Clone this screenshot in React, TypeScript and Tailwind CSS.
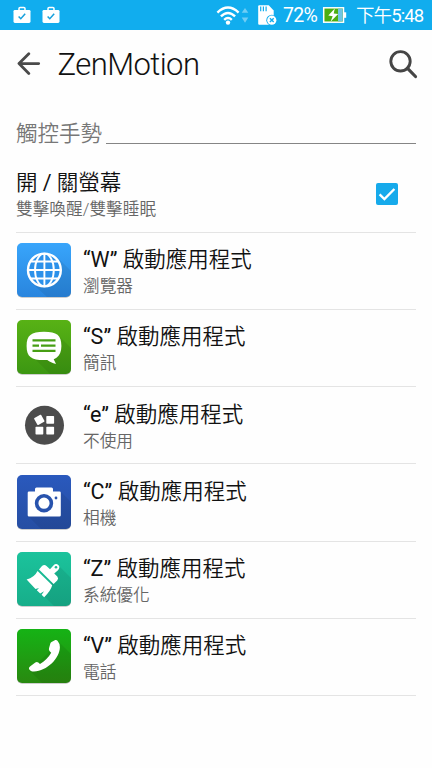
import React, { useId } from "react";

const FONT = "font-[Roboto,'Noto_Sans_CJK_TC',sans-serif]";

type TileProps = { from: string; to: string; shadow: string; children: React.ReactNode };

function Tile({ from, to, shadow, children }: TileProps) {
  const id = useId();
  return (
    <svg className="block h-14 w-14" viewBox="0 0 56 56">
      <defs>
        <linearGradient id={id} x1="0" y1="0" x2="0" y2="1">
          <stop offset="0" stopColor={from} />
          <stop offset="1" stopColor={to} />
        </linearGradient>
        <clipPath id={id + "c"}>
          <rect x="1" y="1" width="54" height="54" rx="5" />
        </clipPath>
      </defs>
      <rect x="1" y="1.7" width="54" height="54" rx="5" fill="#000" opacity="0.25" />
      <rect x="1" y="1" width="54" height="54" rx="5" fill={`url(#${id})`} />
      <path d={shadow} fill="#000" opacity="0.07" clipPath={`url(#${id}c)`} />
      {children}
    </svg>
  );
}

function Browser() {
  return (
    <Tile from="#38a5fb" to="#2985de" shadow="M41 15 56 30V56H32L16 41Z">
      <circle cx="28.4" cy="28" r="17" fill="#2c91ea" />
      <g fill="none" stroke="#fff" strokeWidth="1.9">
        <circle cx="28.4" cy="28" r="16.4" strokeWidth="2.4" />
        <ellipse cx="28.4" cy="28" rx="9.4" ry="16.4" />
        <path d="M28.4 11.4v33.2M11.8 28H45M14.5 19.5h27.8M14.5 36.5h27.8" />
      </g>
    </Tile>
  );
}

function Messages() {
  return (
    <Tile from="#58b215" to="#3c9712" shadow="M43 17 56 30V56H35L17 38Z">
      <path d="M28 12.7c13 0 17.4 3.500 17.400 14.300 0 5.500-1.600 9.400-4.600 11.500-1.100.8-2.100 1.300-3.100 1.700l2.300 4.800c-3.600-.8-6.500-2.300-8.700-4-1.100.1-2.100.1-3.300.1-12.800 0-17.400-3.400-17.400-14.100S15 12.700 28 12.700Z" fill="#fff" />
      <path d="M16.500 21.300h23M16.500 26.600h6.500m2 0h14.500M16.500 31.900h23" stroke="#479f14" strokeWidth="2.200" />
    </Tile>
  );
}

function Unused() {
  return (
    <svg className="block h-14 w-14" viewBox="0 0 56 56">
      <circle cx="28.5" cy="28.3" r="19.5" fill="#4c4c4c" />
      <g fill="#fff">
        <rect x="19.3" y="18.9" width="8" height="8" rx=".7" transform="rotate(-29 23.300 22.900)" />
        <rect x="30.3" y="19" width="7.8" height="7.8" rx=".7" />
        <rect x="19.5" y="29.7" width="7.8" height="7.8" rx=".7" />
        <rect x="30.3" y="29.7" width="7.8" height="7.8" rx=".7" />
      </g>
    </svg>
  );
}

function Camera() {
  return (
    <Tile from="#2a59bd" to="#264ea3" shadow="M45 18 56 29V56H26L12 42Z">
      <path d="M13 17.500h6v-2.500q0-1.500 1.500-1.500h15q1.500 0 1.500 1.500v2.500h6.500q1.300 0 1.300 1.300v22.400q0 1.300-1.300 1.300H13q-1.300 0-1.300-1.300V18.800q0-1.300 1.300-1.300Z" fill="#fff" />
      <circle cx="28" cy="29.2" r="7.4" fill="none" stroke="#2853ad" strokeWidth="3.6" />
      <circle cx="40" cy="24" r="1.4" fill="#2853ad" />
    </Tile>
  );
}

function Cleaner() {
  return (
    <Tile from="#1bc39c" to="#17ae8a" shadow="M43 15 56 28V56H39L28 45Z">
      <g fill="#fff">
        <path d="M23 18.500 26 15Q28.400 13 30.500 15L34 18.300 37.400 14.400Q40 11.900 42.300 14T42 19.200L38.200 22.500 41.300 25.600Q43 27.500 41.200 29.600L37.600 32.900Z" />
        <path d="M21.600 20 36.200 34.300Q34.800 39.800 28.200 46.200L25.600 43.800 28.100 40.200 24.200 42.500 20.800 39.300 23 36.900 19.500 38 10.600 28.500Q18.300 26.600 21.600 20Z" />
      </g>
      <circle cx="40" cy="16.2" r="1.3" fill="#1bb894" />
    </Tile>
  );
}

function Phone() {
  return (
    <Tile from="#15b315" to="#298910" shadow="M43 14 56 27V56H27L14 43Z">
      <path d="M35.500 13.900L39.300 12.100Q40.600 11.700 41.500 12.800 43.900 15.500 43.900 19.300C43.500 30.800 31 42.900 18 43.500 15.700 43.500 13.800 42.500 13 40.900Q12.500 39.600 14 38.400L19.300 34.400Q21 33.500 22.300 34.600L24 35.900C28.600 33.300 32.800 29.300 35.200 24.800L33.500 23Q32.600 21.900 33 20.300L34.500 15Q34.800 14.200 35.500 13.900Z" fill="#fff" />
    </Tile>
  );
}

const gestures = [
  { key: "W", app: "瀏覽器", Icon: Browser },
  { key: "S", app: "簡訊", Icon: Messages },
  { key: "e", app: "不使用", Icon: Unused },
  { key: "C", app: "相機", Icon: Camera },
  { key: "Z", app: "系統優化", Icon: Cleaner },
  { key: "V", app: "電話", Icon: Phone },
];

function Bag() {
  return (
    <svg className="block h-[18px] w-[18px]" viewBox="0 0 18 18">
      <path d="M6 4V2.500Q6 1.400 7.100 1.400h3.800Q12 1.400 12 2.500V4" fill="none" stroke="#fff" strokeWidth="1.5" />
      <rect x=".5" y="3.9" width="17" height="13" rx="1.4" fill="#fff" />
      <path d="m5.600 10.400 2.200 2.300 4.400-4.900" fill="none" stroke="#16a0dc" strokeWidth="1.5" />
    </svg>
  );
}

function StatusBar() {
  return (
    <div className="flex h-[30px] items-center bg-[#11adee] text-white">
      <div className="flex gap-[11px] pl-[12.5px]">
        <Bag />
        <Bag />
      </div>
      <svg className="ml-auto block h-[30px] w-[62px] shrink-0" viewBox="216 0 62 30">
        <g fill="none" stroke="#fff" strokeWidth="2.4">
          <path d="M217.400 12.600Q228 2.500 238.600 12.600" />
          <path d="M220.900 16.400Q228 9.400 235.100 16.400" />
          <path d="M224.200 19.900Q228 16.100 231.800 19.900" />
        </g>
        <circle cx="228" cy="22.6" r="2.2" fill="#fff" />
        <path d="M245 8 248.300 12.700H241.700ZM245 22.800 248.300 17.600H241.700Z" fill="#70cdf4" />
        <path d="M259.200 5.300h9.500l5 5.200v13.200q0 1-1 1h-13.500q-1 0-1-1V6.300q0-1 1-1Z" fill="#fff" />
        <path d="M260.700 6.500v4.800m2.700-4.800v4.800m2.700-4.800v4.800" stroke="#11adee" strokeWidth="1.2" />
        <circle cx="271.8" cy="20.2" r="5.5" fill="#11adee" />
        <circle cx="271.8" cy="20.2" r="4.6" fill="#fff" />
        <path d="m269.900 18.300 3.800 3.800m0-3.800-3.800 3.800" stroke="#11adee" strokeWidth="1.4" />
      </svg>
      <span className="ml-[5px] w-[36px] text-[19.5px] font-normal leading-[30px] whitespace-nowrap pt-px tracking-[-0.7px]">72%</span>
      <svg className="ml-[3px] block h-[30px] w-[25px] shrink-0" viewBox="322 0 25 30">
        <rect x="323.7" y="7.8" width="19.8" height="14.4" fill="#4cae12" stroke="#fff" strokeWidth="1.5" />
        <path d="M338 8.600h4.700v12.800H338Z" fill="#70c5e5" />
        <path d="M344 12.300h2.200v5.500H344Z" fill="#fff" />
        <path d="M334.800 8.600 328.300 15.600 332.700 16.200 330.500 21.700 338.200 14.100 333.700 13.500Z" fill="#fff" />
      </svg>
      <span className="ml-[9px] mr-[10px] w-[66px] pt-px text-[18.5px] font-[350] leading-[30px] whitespace-nowrap tracking-[-0.9px]">下午<span className="font-normal">5:48</span></span>
    </div>
  );
}

export default function App() {
  return (
    <div className={`${FONT} h-[768px] w-[432px] overflow-hidden bg-[#fefefe] text-[#111]`}>
      <StatusBar />
      <header className="flex h-[70px] items-center pl-4 pr-[14px]">
        <svg className="block h-[26px] w-[26px]" viewBox="0 0 26 26" fill="none" stroke="#4a4a4a" strokeWidth="2.8" strokeLinecap="round" strokeLinejoin="round">
          <path d="M12.800 1.800 3 11.600l9.800 9.800M3 11.600h19.700" />
        </svg>
        <h1 className="ml-[15.5px] text-[31px] font-light leading-[40px] tracking-[-0.55px]">ZenMotion</h1>
        <svg className="ml-auto block h-[30px] w-[30px]" viewBox="0 0 30 30" fill="none" stroke="#454545" strokeWidth="2.9">
          <circle cx="12.5" cy="11.3" r="9.7" />
          <path d="m19.300 18.200 8.200 8.300" strokeWidth="3.2" strokeLinecap="round" />
        </svg>
      </header>
      <main className="px-4">
        <div className="flex h-[55px] items-end pb-[11px]">
          <h2 className="mb-[-6px] text-[21.5px] font-[350] leading-[32px] text-[#777]">觸控手勢</h2>
          <div className="ml-[4px] h-px flex-1 bg-[#858585]" />
        </div>
        <div className="flex h-[78px] items-start border-b border-[#e4e4e4] pt-[14px]">
          <div>
            <div className="text-[21.5px] font-[350] leading-[28px]">開 <span className="font-normal">/</span> 關螢幕</div>
            <div className="text-[16.7px] font-[350] leading-[26px] text-[#666]">雙擊喚醒/雙擊睡眠</div>
          </div>
          <svg className="ml-auto mr-[17px] mt-[13px] block h-6 w-6" viewBox="0 0 24 24">
            <rect x="1" y="1" width="22" height="22" rx="2" fill="#16aaeb" />
            <path d="m4.600 12.400 4.800 4.600L19.400 7" fill="none" stroke="#fff" strokeWidth="2.4" />
          </svg>
        </div>
        {gestures.map(({ key, app, Icon }) => (
          <div key={key} className="flex h-[77.17px] items-start border-b border-[#e4e4e4]">
            <div className="pt-[9.3px]">
              <Icon />
            </div>
            <div className="ml-[11px] pt-[13.3px]">
              <div className="text-[21.5px] font-[350] leading-[28px]"><span className="font-normal">“{key}” </span>啟動應用程式</div>
              <div className="text-[16.7px] font-[350] leading-[26px] text-[#666]">{app}</div>
            </div>
          </div>
        ))}
      </main>
    </div>
  );
}
